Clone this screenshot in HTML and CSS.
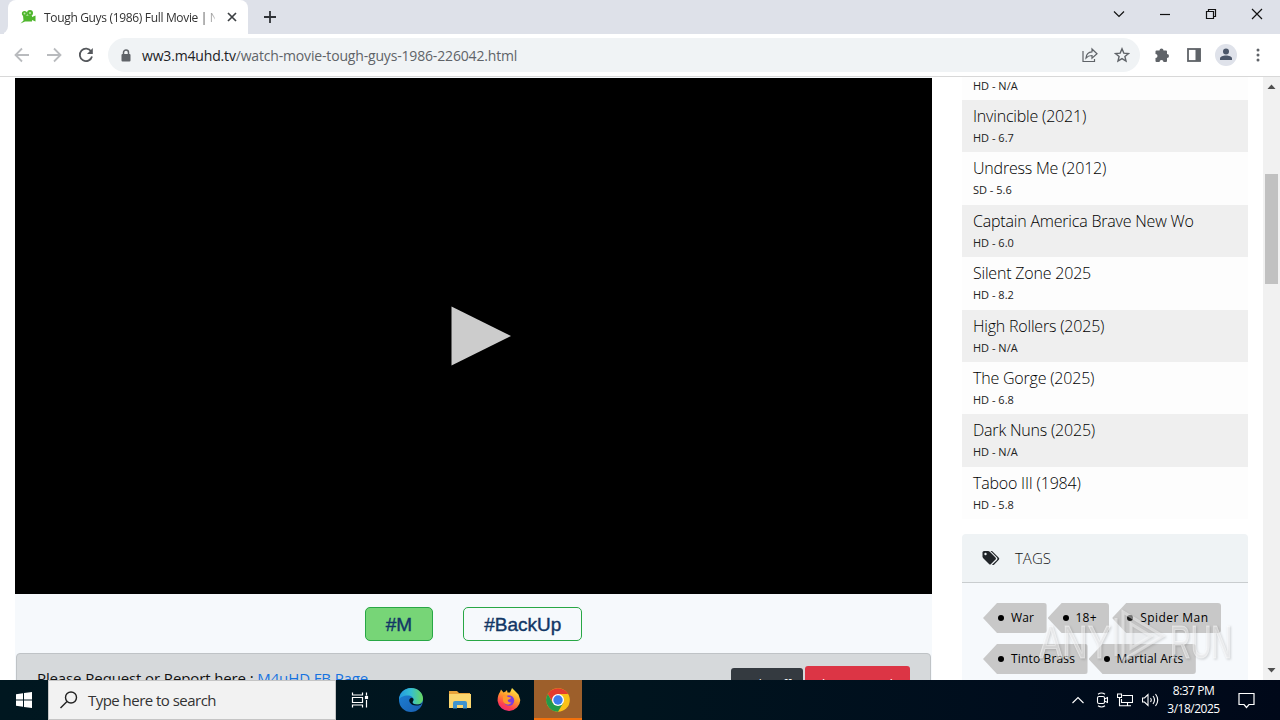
FILE: index.html
```html
<!DOCTYPE html>
<html lang="en">
<head>
    <meta charset="UTF-8">
    <meta name="viewport" content="width=device-width, initial-scale=1.0">
    <title>Tough Guys (1986) Full Movie</title>
    <link rel="stylesheet" href="styles.css">
</head>
<body>
    <!-- browser tabs -->
    <div class="tabstrip">
        <div class="tab-edge"></div>
        <div class="tab">
            <svg class="favicon" width="16" height="16" viewBox="0 0 16 16" fill="#4fb62d">
                <circle cx="4.5" cy="4.5" r="2.6"/><circle cx="10" cy="4" r="3"/>
                <path d="M3 6.5h9V8l3.500-1.500v6L12 11v1.500H5L.5 14.500l3-3z"/>
                <circle cx="4.5" cy="4.5" r="1" fill="#b9e6a8"/><circle cx="10" cy="4" r="1" fill="#b9e6a8"/>
            </svg>
            <span class="tab-title">Tough Guys (1986) Full Movie | N</span>
            <svg class="tab-close" width="10" height="10" viewBox="0 0 10 10" stroke="#3c4043" stroke-width="1.7"><path d="M1 1l8 8M9 1l-8 8"/></svg>
        </div>
        <svg class="new-tab" width="12" height="12" viewBox="0 0 12 12" stroke="#2f3237" stroke-width="1.8"><path d="M6 0v12M0 6h12"/></svg>
        <div class="window-buttons">
            <svg width="12" height="12" viewBox="0 0 12 12"><path d="M1 3.5l5 5 5-5"/></svg>
            <svg width="12" height="12" viewBox="0 0 12 12"><path d="M1 6.5h10"/></svg>
            <svg width="12" height="12" viewBox="0 0 12 12"><path d="M1.5 3.5h7v7h-7zM3.5 3.5v-2h7v7h-2"/></svg>
            <svg width="12" height="12" viewBox="0 0 12 12"><path d="M1 1l10 10M11 1L1 11"/></svg>
        </div>
    </div>

    <div class="toolbar">
        <div class="nav-buttons">
            <svg width="16" height="16" viewBox="0 0 16 16" stroke="#b9bbbe"><path d="M15 8H2M8 1.5L1.5 8 8 14.5"/></svg>
            <svg width="16" height="16" viewBox="0 0 16 16" stroke="#b9bbbe"><path d="M1 8h13M8 1.5L14.5 8 8 14.5"/></svg>
            <svg width="16" height="16" viewBox="0 0 16 16" stroke="#55585c"><path d="M13.2 4.5A6.2 6.2 0 1 0 14 9.5"/><path d="M14.8 1v6H9z" fill="#55585c" stroke="none"/></svg>
        </div>
        <div class="address">
            <svg class="lock" width="10" height="13" viewBox="0 0 10 13"><path d="M2.5 6V3.5a2.5 2.5 0 0 1 5 0V6" fill="none" stroke="#5f6368" stroke-width="1.5"/><rect x=".5" y="5" width="9" height="7.5" rx="1" fill="#5f6368"/></svg>
            <span class="url"><b>ww3.m4uhd.tv</b>/watch-movie-tough-guys-1986-226042.html</span>
            <svg class="share" width="16" height="16" viewBox="0 0 16 16" fill="none" stroke="#5f6368" stroke-width="1.2"><path d="M1 4v10.5h11.5V12"/><path d="M4 11c.3-4 2.8-6 6-6.2V2l5 4.800-5 4.400V8.500C7.500 8.500 5.500 9.200 4 11z"/></svg>
            <svg width="16" height="16" viewBox="0 0 16 16" fill="none" stroke="#5f6368" stroke-width="1.4"><path d="M8 1.8l1.8 4.3 4.7.4-3.6 3 1.100 4.600L8 11.600l-4 2.500 1.100-4.600-3.600-3 4.700-.4z"/></svg>
        </div>
        <svg class="puzzle" width="16" height="16" viewBox="0 0 16 16" fill="#5f6368"><path d="M1.5 4.500q0-1 1-1h3a2 2 0 1 1 4 0h2.500q1 0 1 1V7a2 2 0 1 1 0 4v3q0 1-1 1H9.500a2 2 0 0 0-4 0h-3q-1 0-1-1v-3a2 2 0 0 0 0-4z"/></svg>
        <svg class="panel-icon" width="14" height="14" viewBox="0 0 14 14"><rect x="1" y="1" width="12" height="12" fill="none" stroke="#5f6368" stroke-width="1.8"/><rect x="8.5" y="1" width="5" height="12" fill="#5f6368"/></svg>
        <svg class="avatar" width="22" height="22" viewBox="0 0 22 22"><circle cx="11" cy="11" r="11" fill="#dfe2ea"/><g fill="#4b5669"><circle cx="11" cy="7.5" r="3"/><path d="M5 16v-1.500c0-2 3-3 6-3s6 1 6 3V16z"/></g></svg>
        <svg class="dots" width="4" height="14" viewBox="0 0 4 14" fill="#5f6368"><circle cx="2" cy="2" r="1.5"/><circle cx="2" cy="7" r="1.5"/><circle cx="2" cy="12" r="1.5"/></svg>
    </div>

    <div class="page">
        <div class="main">
            <div class="player">
                <svg width="60" height="60" viewBox="0 0 60 60"><path d="M.5 .5L60 30 .5 59.5z" fill="#ccc"/></svg>
            </div>
            <div class="servers">
                <span class="server active">#M</span>
                <span class="server">#BackUp</span>
            </div>
            <div class="notice">
                <p>Please Request or Report here : <a>M4uHD FB Page</a></p>
                <span class="btn dark">Light Off</span>
                <span class="btn red">Theater mode</span>
            </div>
        </div>

        <div class="sidebar">
            <ul class="movies">
                <li class="cut"><small>HD - N/A</small></li>
                <li>Invincible (2021)<small>HD - 6.7</small></li>
                <li>Undress Me (2012)<small>SD - 5.6</small></li>
                <li>Captain America Brave New Wo<small>HD - 6.0</small></li>
                <li>Silent Zone 2025<small>HD - 8.2</small></li>
                <li>High Rollers (2025)<small>HD - N/A</small></li>
                <li>The Gorge (2025)<small>HD - 6.8</small></li>
                <li>Dark Nuns (2025)<small>HD - N/A</small></li>
                <li>Taboo III (1984)<small>HD - 5.8</small></li>
            </ul>
            <div class="tags-head">
                <svg width="18" height="16" viewBox="0 0 18 16" fill="#212529"><path d="M.5 2.500q0-1.500 1.500-1.500h4q1 0 2 1l5.500 5.500q1 1 0 2L9 14q-1 1-2 0L1.500 8.500q-1-1-1-2z"/><path d="M8.500 1H10l6.800 6.800q1 1 0 2L12 14.700q-1 .8-2 0l5-4.800q1-1.200 0-2.400z"/><circle cx="3.5" cy="4" r="1.2" fill="#eff3f5"/></svg>
                <span>TAGS</span>
            </div>
            <div class="tags">
                <span class="tag">War</span>
                <span class="tag">18+</span>
                <span class="tag">Spider Man</span>
                <span class="tag">Tinto Brass</span>
                <span class="tag">Martial Arts</span>
            </div>
        </div>

        <div class="scrollbar">
            <svg width="9" height="5" viewBox="0 0 9 5"><path d="M.5 5l4-4.500 4 4.500z" fill="#505050"/></svg>
            <div class="thumb"></div>
            <svg class="down" width="9" height="5" viewBox="0 0 9 5"><path d="M.5 0l4 4.500 4-4.500z" fill="#505050"/></svg>
        </div>
    </div>

    <div class="taskbar">
        <div class="start">
            <svg width="16" height="16" viewBox="0 0 16 16" fill="#fff"><path d="M0 2.300l7-1v6.200H0zM8 1.100L16 0v7.500H8zM0 8.500h7v6.200l-7-1zM8 8.500h8V16l-8-1.100z"/></svg>
        </div>
        <div class="search">
            <svg width="18" height="18" viewBox="0 0 18 18" fill="none" stroke="#222" stroke-width="1.4"><circle cx="11" cy="6.5" r="5.5"/><path d="M7 10.500l-6.500 6.500"/></svg>
            <span>Type here to search</span>
        </div>
        <div class="app task-view">
            <svg width="18" height="18" viewBox="0 0 18 18" fill="none" stroke="#fff" stroke-width="1.2"><path d="M1.500 1.500v2.500h10V1.500M1.500 16.500V14h10v2.500M1.500 6.500h10v5h-10zM15.500 1.500v3M15.500 9v7.500"/><rect x="14.5" y="5.5" width="2" height="2" fill="#fff"/></svg>
        </div>
        <div class="app">
            <svg width="24" height="24" viewBox="0 0 24 24">
                <defs>
                    <linearGradient id="edge-top"><stop offset="0" stop-color="#2298df"/><stop offset=".5" stop-color="#35bfd2"/><stop offset="1" stop-color="#69d85d"/></linearGradient>
                    <linearGradient id="edge-low" x2="1" y2="1"><stop offset="0" stop-color="#1b82d6"/><stop offset="1" stop-color="#1a5eb0"/></linearGradient>
                </defs>
                <circle cx="12" cy="12" r="12" fill="url(#edge-low)"/>
                <path d="M0 12C0 5 5.500 0 12 0c7 0 12 5 12 10.500 0 4-3 6-6.200 6-3 0-4.300-1.200-4.300-2.200 0-.8 1-1 1-2.800 0-2.200-2.500-4-5.700-4C4.500 7.500 1 9 0 12z" fill="url(#edge-top)"/>
                <path d="M13.500 14.300c0-1 1-1 1-2.800 0-1-1-1.800-2.200-1.800-2 .5-2.600 2.500-1.600 4.600 1.500 3 6 4.200 11 2.400l1.500-1.700c-1.600 1.200-3.500 1.500-5.400 1.500-3 0-4.300-1.200-4.300-2.200z" fill="#00141e"/>
            </svg>
        </div>
        <div class="app">
            <svg width="22" height="20" viewBox="0 0 22 20"><path d="M0 1h8l2 2h11v4H0z" fill="#e8a33a"/><path d="M0 4h22v14H0z" fill="#fbd66e"/><path d="M4 18.500V13q0-2 2-2h10q2 0 2 2v5.500h-4V15H8v3.500z" fill="#3f94ce"/></svg>
        </div>
        <div class="app">
            <svg width="24" height="24" viewBox="0 0 24 24">
                <defs><linearGradient id="fox" x1=".8" y1="0" x2=".3" y2="1"><stop offset="0" stop-color="#fff04a"/><stop offset=".45" stop-color="#ff9a2b"/><stop offset=".8" stop-color="#ff3d51"/><stop offset="1" stop-color="#ec2c7a"/></linearGradient></defs>
                <path d="M3 4l1-2.500 2.500 3 2-1 1.500-1.500.5 2.500h2.500L15 0l4 4 2.500 2.500L23.300 12A11.400 11.400 0 0 1 .6 13C.5 9 1.500 6 3 4z" fill="url(#fox)"/>
                <circle cx="12" cy="12.5" r="5.2" fill="#7a3be0"/>
                <path d="M6 8c2-1 4-.5 5 1l3 .5c0 1.500-2 1.500-3 2.500s1 3 3.500 2.500c-2 3-7 2.500-8.500-1.500z" fill="#ff9a2b"/>
            </svg>
        </div>
        <div class="app current">
            <svg width="24" height="24" viewBox="0 0 24 24"><circle cx="12" cy="12" r="11.8" fill="#fbc116"/><path d="M12 6h10.200a11.800 11.800 0 0 0-20.400 0L7 15z" fill="#e33b2e"/><path d="M1.800 6A11.800 11.800 0 0 0 12 23.800L17.200 15H6.800z" fill="#229a4b"/><circle cx="12" cy="12" r="6" fill="#fff"/><circle cx="12" cy="12" r="4.7" fill="#3b7ded"/></svg>
        </div>
        <div class="tray">
            <svg width="12" height="8" viewBox="0 0 12 8"><path d="M.5 7L6 1.500 11.500 7"/></svg>
            <svg width="12" height="18" viewBox="0 0 12 18"><rect x="1.5" y="5.5" width="7" height="7" rx="1.5"/><path d="M8.500 8l3-1.500v5L8.500 10M2 3.200q3.500-2.500 7 0M2 14.800q3.500 2.500 7 0"/></svg>
            <svg width="16" height="14" viewBox="0 0 16 14"><path d="M5.500 2.500h10v7h-11V6M10.500 9.500v3M6 12.800h8M.5 1h4v3.500h-4zM2.500 4.500v8.300H6"/></svg>
            <svg width="17" height="14" viewBox="0 0 17 14"><path d="M.5 5v4h2l3.500 3.500v-11L2.500 5zM8.500 5q1.500 2 0 4M11 3q3 4 0 8M13.500 1q4.500 6 0 12"/></svg>
        </div>
        <div class="clock">8:37 PM<br>3/18/2025</div>
        <svg class="notify" width="17" height="17" viewBox="0 0 17 17" fill="none" stroke="#fff" stroke-width="1.2"><path d="M1 1.500h15v11h-5L8.500 15.500 6 12.500H1z"/></svg>
    </div>

    <svg class="watermark" width="200" height="70" viewBox="0 0 200 70">
        <text x="1" y="56" textLength="72" lengthAdjust="spacingAndGlyphs">ANY</text>
        <path d="M78 16v38M85 10v48l40-24z"/>
        <path d="M93 22v24l20-12z"/>
        <text x="132" y="56" textLength="62" lengthAdjust="spacingAndGlyphs">RUN</text>
    </svg>
</body>
</html>
```
FILE: styles.css
```css
* {
    box-sizing: border-box;
}
body {
    margin: 0;
    width: 1280px;
    height: 720px;
    overflow: hidden;
    display: flex;
    flex-direction: column;
    position: relative;
    font-family: 'Open Sans', 'Noto Sans', sans-serif;
    background: #fff;
    color: #111;
}
svg {
    display: block;
    flex: none;
}
.tabstrip {
    height: 34px;
    flex: none;
    display: flex;
    align-items: center;
    background: #dee1e9;
}
.tab-edge {
    width: 8px;
    height: 34px;
    background: #dee1e9;
    border-bottom-right-radius: 8px;
    box-shadow: 4px 4px 0 #fff;
    clip-path: inset(0);
}
.tab {
    width: 240px;
    height: 34px;
    display: flex;
    align-items: center;
    padding-left: 12px;
    background: #fff;
    border-radius: 8px 8px 0 0;
}
.tab-title {
    width: 171px;
    margin-left: 8px;
    overflow: hidden;
    white-space: nowrap;
    font-size: 12px;
    letter-spacing: -0.33px;
    color: #333;
    -webkit-mask-image: linear-gradient(to right, #000 158px, transparent 175px);
    mask-image: linear-gradient(to right, #000 158px, transparent 175px);
}
.tab-close {
    margin-left: 12px;
}
.new-tab {
    margin-left: 16px;
}
.window-buttons {
    display: flex;
    gap: 34px;
    margin-left: auto;
    margin-right: 17px;
    margin-bottom: 6px;
    fill: none;
    stroke: #111;
    stroke-width: 1.2;
}
.toolbar {
    height: 43px;
    flex: none;
    display: flex;
    align-items: center;
    border-bottom: 1px solid #d8d8d8;
    background: #fff;
}
.nav-buttons {
    display: flex;
    gap: 16px;
    margin-left: 14px;
    fill: none;
    stroke-width: 1.8;
}
.address {
    width: 1032px;
    height: 34px;
    margin-left: 14px;
    padding: 0 10px 0 13px;
    display: flex;
    align-items: center;
    border-radius: 17px;
    background: #f0f3f5;
}
.url {
    margin-left: 11px;
    font-size: 14px;
    letter-spacing: -0.17px;
    color: #5f6368;
}
.url b {
    font-weight: normal;
    color: #202124;
}
.share {
    margin-left: auto;
    margin-right: 16px;
}
.puzzle {
    margin-left: 14px;
}
.panel-icon {
    margin-left: 17px;
}
.avatar {
    margin-left: 14px;
}
.dots {
    margin-left: 19px;
}

.page {
    height: 603px;
    flex: none;
    display: flex;
    overflow: hidden;
}
.main {
    width: 917px;
    margin-left: 15px;
    padding-top: 1px;
    background: #f6f9fc;
}
.player {
    height: 516px;
    display: flex;
    align-items: center;
    justify-content: center;
    padding-left: 15px;
    background: #000;
}
.servers {
    height: 59px;
    display: flex;
    justify-content: center;
    gap: 30px;
    padding-top: 13px;
}
.server {
    height: 34px;
    padding: 0 20px;
    border: 1px solid #28a745;
    border-radius: 5px;
    font: 19px/33px 'Liberation Sans', Arial, sans-serif;
    -webkit-text-stroke: 0.4px #123766;
    color: #123766;
}
.server.active {
    background: #77d577;
}
.notice {
    height: 80px;
    margin: 0 1px;
    display: flex;
    align-items: flex-start;
    padding: 12px 20px 0;
    border: 1px solid #bfc3c6;
    border-radius: 4px;
    background: #d6d9db;
    font-size: 15px;
}
.notice p {
    margin: 0 auto 0 0;
    line-height: 24px;
    letter-spacing: -0.12px;
}
.notice a {
    color: #1673e0;
}
.btn {
    margin-top: 2px;
    height: 31px;
    width: 72px;
    border-radius: 3px;
    font-size: 12px;
    line-height: 33px;
    text-align: center;
    white-space: nowrap;
    color: #fff;
}
.btn.dark {
    background: #343a40;
}
.btn.red {
    width: 105px;
    margin-top: 0;
    margin-left: 2px;
    font-size: 13px;
    line-height: 36px;
    background: #dc3545;
}

.sidebar {
    width: 286px;
    margin-left: 30px;
}
.movies {
    list-style: none;
    margin: 0;
    padding: 0;
}
.movies li {
    height: 52.4px;
    padding: 4px 11px 0;
    font-size: 16px;
    font-weight: 300;
    line-height: 24px;
    letter-spacing: -0.2px;
    color: #000;
    background: #fdfdfd;
}
.movies li:nth-child(even) {
    background: #efefef;
}
.movies li.cut {
    height: 23px;
    padding-top: 0;
}
.movies small {
    display: block;
    font-size: 11px;
    font-weight: 400;
    line-height: 20px;
    letter-spacing: 0;
    color: #222;
}
.movies .cut small {
    line-height: 18px;
}
.tags-head {
    height: 49px;
    margin-top: 14.8px;
    padding-left: 20px;
    display: flex;
    align-items: center;
    border-bottom: 1px solid #c9cdcf;
    border-radius: 4px 4px 0 0;
    background: #eff3f5;
    font-size: 15px;
    font-weight: 300;
}
.tags-head span {
    margin-left: 15px;
}
.tags {
    height: 120px;
    display: flex;
    flex-wrap: wrap;
    align-content: flex-start;
    gap: 11px 1px;
    padding: 20px 20px 0 21px;
    background: #f6f9fc;
}
.tag {
    height: 30px;
    display: flex;
    align-items: center;
    padding-right: 12.5px;
    border-radius: 3px;
    background: #c8c8c8;
    clip-path: polygon(0 50%, 14px 0, 100% 0, 100% 100%, 14px 100%);
    font-size: 12px;
    letter-spacing: 0.15px;
    color: #000;
}
.tag:nth-child(3) {
    margin-left: 2px;
    letter-spacing: 0.45px;
}
.tag::before {
    content: '';
    width: 6px;
    height: 6px;
    margin: 0 7px 0 15px;
    border-radius: 50%;
    background: #000;
}
.scrollbar {
    width: 17px;
    margin-left: auto;
    padding-top: 7px;
    display: flex;
    flex-direction: column;
    align-items: center;
    background: #f1f1f1;
}
.thumb {
    width: 13px;
    height: 110px;
    margin-top: 85px;
    background: #c1c1c1;
}
.scrollbar .down {
    margin-top: auto;
    margin-bottom: 7px;
}

.taskbar {
    height: 40px;
    flex: none;
    display: flex;
    background: linear-gradient(to right, #001720, #00141e 50%, #000d1d 80%, #000819);
    color: #fff;
}
.start {
    width: 48px;
    display: flex;
    align-items: center;
    justify-content: center;
}
.search {
    width: 288px;
    padding-left: 11px;
    display: flex;
    align-items: center;
    gap: 10px;
    border: 1px solid #c5c5c5;
    background: #f2f2f2;
    font-size: 15px;
    letter-spacing: -0.53px;
    color: #333;
}
.app {
    width: 48px;
    margin-right: 1px;
    display: flex;
    align-items: center;
    justify-content: center;
}
.app.task-view {
    margin-right: 3px;
}
.app.current {
    border-bottom: 2px solid #f4710c;
    padding-top: 2px;
    background: #9d5f2b;
}
.tray {
    display: flex;
    align-items: center;
    gap: 9px;
    margin-left: auto;
    fill: none;
    stroke: #fff;
    stroke-width: 1.1;
}
.tray svg:first-child {
    margin-right: 3px;
}
.clock {
    width: 72px;
    padding: 2px 3px 0 0;
    font-size: 12px;
    line-height: 18px;
    letter-spacing: -0.5px;
    text-align: center;
}
.notify {
    margin: 12px 25px 0 7px;
}
.watermark {
    position: absolute;
    left: 1038px;
    top: 602px;
    fill: rgba(255, 255, 255, 0.45);
    stroke: rgba(255, 255, 255, 0.45);
    stroke-width: 1;
    filter: drop-shadow(1px 1px 1px rgba(0, 0, 0, 0.3));
    font: 46px 'Liberation Sans', Arial, sans-serif;
}
.watermark path {
    fill: rgba(255, 255, 255, 0.1);
    stroke: rgba(255, 255, 255, 0.45);
    stroke-width: 3;
}
```
